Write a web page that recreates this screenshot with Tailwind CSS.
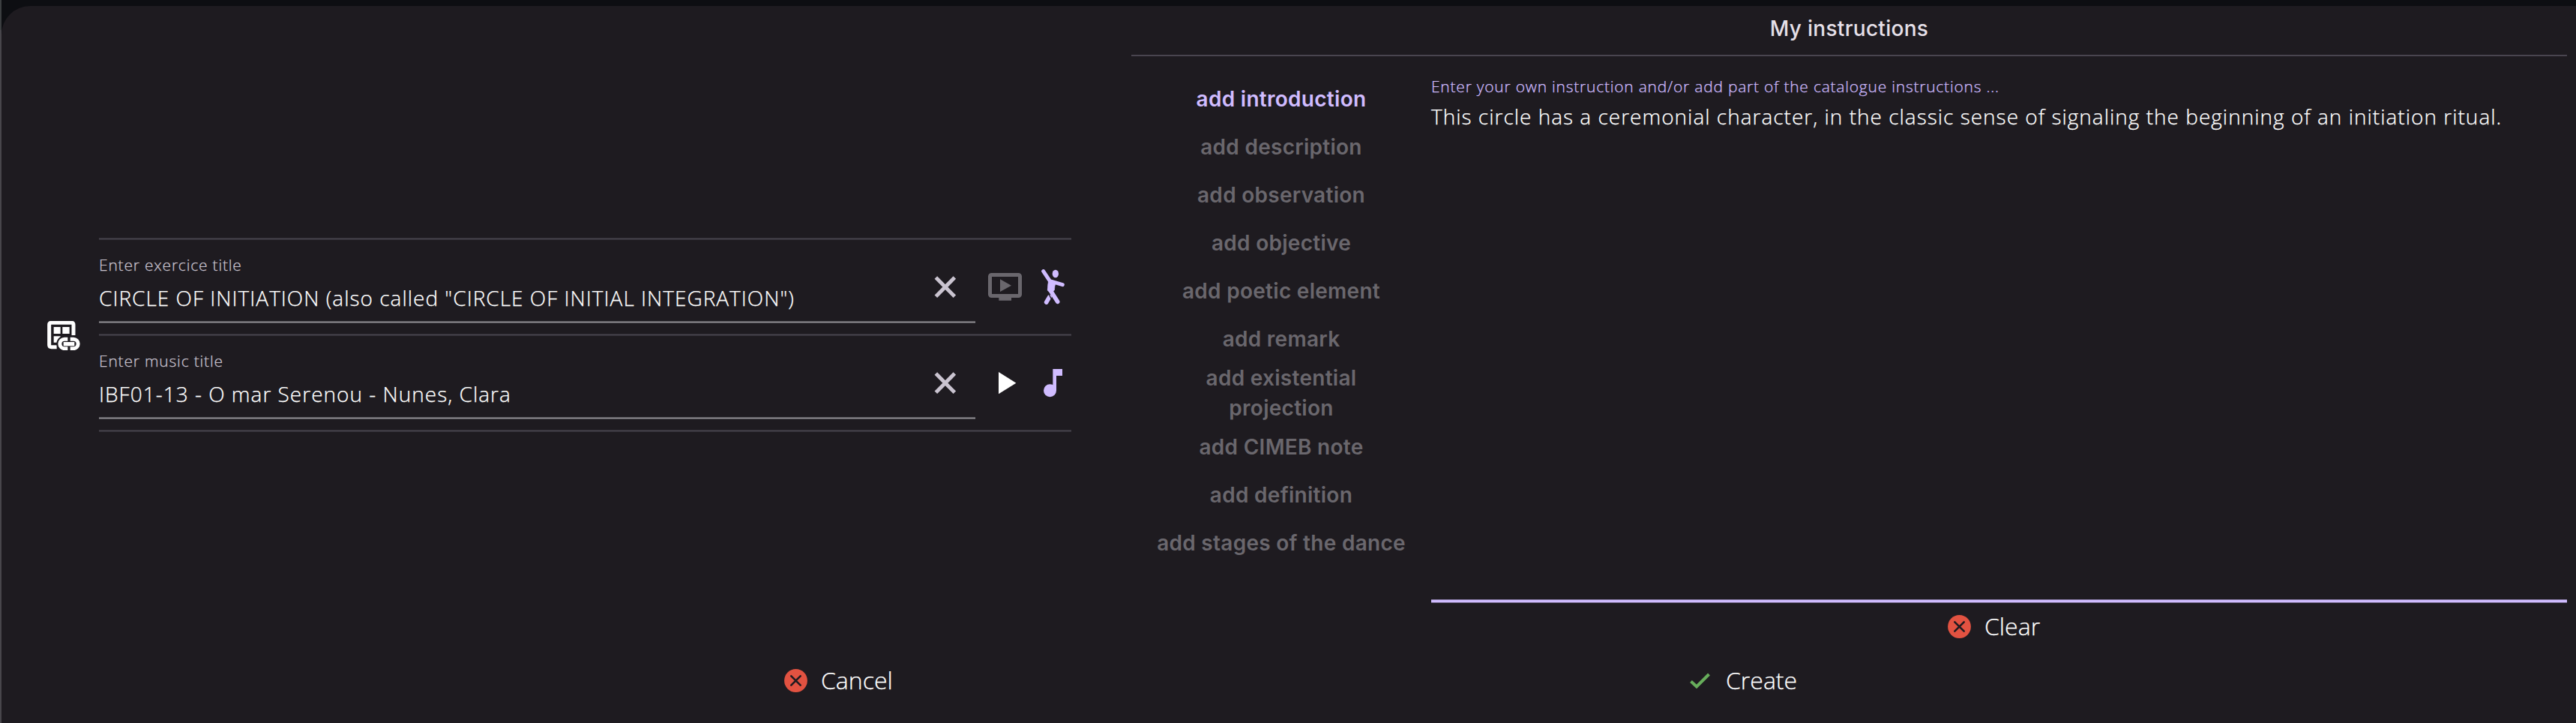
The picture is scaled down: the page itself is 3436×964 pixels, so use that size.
<!DOCTYPE html>
<html lang="en">
<head>
<meta charset="utf-8">
<title>Exercise editor</title>
<script src="https://cdn.jsdelivr.net/npm/@tailwindcss/browser@4"></script>
</head>
<body class="flex h-[964px] w-[3436px] overflow-hidden bg-[#0d0e12] font-['Open_Sans',sans-serif] font-light text-white">
  <div class="h-full w-[2px] shrink-0 bg-[#48464b]">
    <div class="h-[40px] bg-[#3c3f41]"></div>
  </div>
  <div class="mt-2 flex flex-1 flex-col rounded-tl-[38px] bg-[#1e1b20] [-webkit-text-stroke:0.25px]">
    <main class="flex h-[877px]">
      <!-- Exercise and music fields -->
      <section class="flex w-[1507px] items-center pl-[61px]">
        <svg class="mt-0.5 h-[39.33px] w-[44px] shrink-0" viewBox="69 84 132 118">
          <path d="M107 188H86Q77 188 77 180V99Q77 91 86 91H166Q174 91 174 99V141" fill="none" stroke="#fff" stroke-width="15"/>
          <path d="M95 108h27v27H95zM130 108h28v27h-28zM95 145h27v8l-12 17H95z" fill="#fff"/>
          <rect x="106" y="143" width="101" height="64" rx="32" fill="#1e1b20"/>
          <path d="M151 157H138A18.500 18.500 0 0 0 138 194H151M161 157H174A18.500 18.500 0 0 1 174 194H161" fill="none" stroke="#fff" stroke-width="15"/>
          <path d="M134 168h44v16h-44z" fill="#fff"/>
        </svg>
        <div class="ml-[25px] w-[1297px]">
          <div class="h-[3px] border-y border-[#333138] bg-[#48454e]"></div>
          <div class="flex h-[125px]">
            <label class="block w-[1169px]">
              <span class="flex h-[108px]">
                <span class="flex-1 pt-[19px]">
                  <span class="block text-[21px] leading-[28px] tracking-[0.8px] text-[#cac4d0]">Enter exercice title</span>
                  <span class="mt-[11px] block text-[28px] leading-[38px] tracking-[1px]">CIRCLE OF INITIATION (also called "CIRCLE OF INITIAL INTEGRATION")</span>
                </span>
                <svg class="mt-[39px] mr-4 size-12" viewBox="171 177 144 144"><path d="M205 210L280 286M280 210L205 286" stroke="#cac4d0" stroke-width="15"/></svg>
              </span>
              <span class="block h-[3px] border-y border-[#5a585d] bg-[#949297]"></span>
            </label>
            <div class="flex gap-4 pt-[39px] pl-[15px]">
              <svg class="size-12" viewBox="408 177 144 144" fill="#6a676d">
                <rect x="421.500" y="199.500" width="120" height="84" rx="6" fill="none" stroke="#6a676d" stroke-width="15"/>
                <path d="M457 288h50v14h-50zM462 217l45 25-45 25z"/>
              </svg>
              <svg class="size-12" viewBox="600 177 144 144" fill="none" stroke="#d0bcff" stroke-linecap="round" stroke-linejoin="round">
                <ellipse cx="683.500" cy="195" rx="12.500" ry="15.500" fill="#d0bcff" stroke="none"/>
                <path d="M635 185L661 224L712 239" stroke-width="15"/>
                <path d="M656 222L686 228Q679 244 679 261L666 272L652 262Q652 240 656 222z" fill="#d0bcff" stroke-width="2"/>
                <path d="M660 287L647 309" stroke-width="17"/>
                <path d="M651 266L676 312" stroke="#1e1b20" stroke-width="4"/>
                <path d="M661 258L692 307" stroke-width="17"/>
              </svg>
            </div>
          </div>
          <div class="h-[3px] border-y border-[#333138] bg-[#48454e]"></div>
          <div class="flex h-[125px]">
            <label class="block w-[1169px]">
              <span class="flex h-[108px]">
                <span class="flex-1 pt-[19px]">
                  <span class="block text-[21px] leading-[28px] tracking-[0.8px] text-[#cac4d0]">Enter music title</span>
                  <span class="mt-[11px] block text-[28px] leading-[38px] tracking-[1px]">IBF01-13 - O mar Serenou - Nunes, Clara</span>
                </span>
                <svg class="mt-[39px] mr-4 size-12" viewBox="171 177 144 144"><path d="M205 210L280 286M280 210L205 286" stroke="#cac4d0" stroke-width="15"/></svg>
              </span>
              <span class="block h-[3px] border-y border-[#5a585d] bg-[#949297]"></span>
            </label>
            <div class="flex gap-4 pt-[39px] pl-[15px]">
              <svg class="size-12" viewBox="408 561 144 144" fill="#fff"><path d="M456 588L526 632L456 676z"/></svg>
              <svg class="size-12" viewBox="600 561 144 144" fill="#d0bcff"><circle cx="661.500" cy="662" r="25.500"/><path d="M673 576h38v27h-24v59h-14z"/></svg>
            </div>
          </div>
          <div class="h-[3px] border-y border-[#333138] bg-[#48454e]"></div>
        </div>
      </section>

      <!-- Instructions -->
      <section class="w-[1915px]">
        <h2 class="h-[67px] border-b-2 border-[#49454f] pt-[10px] text-center font-['Inter',sans-serif] text-[28px] leading-10 font-medium tracking-[0.29px] text-[#e6e0e9] [-webkit-text-stroke:0px]">My instructions</h2>
        <div class="flex">
          <div class="flex w-[400px] flex-col items-center pt-[25px] text-center font-['Inter',sans-serif] text-[28px] leading-10 font-semibold tracking-[0.28px] text-[#6a676d] [-webkit-text-stroke:0px]">
            <div class="flex h-16 items-center text-[#d0bcff]">add introduction</div>
            <div class="flex h-16 items-center">add description</div>
            <div class="flex h-16 items-center">add observation</div>
            <div class="flex h-16 items-center">add objective</div>
            <div class="flex h-16 items-center">add poetic element</div>
            <div class="flex h-16 items-center">add remark</div>
            <div class="flex h-20 w-[336px] items-center justify-center">add existential projection</div>
            <div class="flex h-16 items-center">add CIMEB note</div>
            <div class="flex h-16 items-center">add definition</div>
            <div class="flex h-16 items-center">add stages of the dance</div>
          </div>
          <div class="w-[1515px]">
            <div class="h-[724px] pt-[26px]">
              <div class="text-[21px] leading-[28px] tracking-[0.77px] text-[#d0bcff]">Enter your own instruction and/or add part of the catalogue instructions ...</div>
              <div class="mt-[6px] text-[28px] leading-10 tracking-[1px]">This circle has a ceremonial character, in the classic sense of signaling the beginning of an initiation ritual.</div>
            </div>
            <div class="h-[5px] border-y border-[#7b6f94] bg-[#d0bcff]"></div>
            <div class="mt-[9px] flex h-[44px] items-center pl-[689px] text-[32px] leading-[44px]">
              <svg class="size-[31px]" viewBox="0 0 31 31"><circle cx="15.500" cy="15.500" r="15.400" fill="#e25241"/><path d="M9.300 9.300L21.700 21.700M21.700 9.300L9.300 21.700" stroke="#1e1b20" stroke-width="2.600" stroke-linecap="round"/></svg>
              <span class="ml-[18px]">Clear</span>
            </div>
          </div>
        </div>
      </section>
    </main>

    <footer class="flex h-[44px] text-[32px] leading-[44px]">
      <div class="flex w-[1208px] items-center pl-[1044px]">
        <svg class="size-[31px] shrink-0" viewBox="0 0 31 31"><circle cx="15.500" cy="15.500" r="15.400" fill="#e25241"/><path d="M9.300 9.300L21.700 21.700M21.700 9.300L9.300 21.700" stroke="#1e1b20" stroke-width="2.600" stroke-linecap="round"/></svg>
        <span class="ml-[18px]">Cancel</span>
      </div>
      <div class="flex items-center pl-[1044px]">
        <svg class="h-[21px] w-[27px]" viewBox="0 0 27 21"><path d="M1.500 11.500L9 18.500L25.500 2" fill="none" stroke="#67ad5b" stroke-width="4"/></svg>
        <span class="ml-[21px]">Create</span>
      </div>
    </footer>
  </div>
</body>
</html>
